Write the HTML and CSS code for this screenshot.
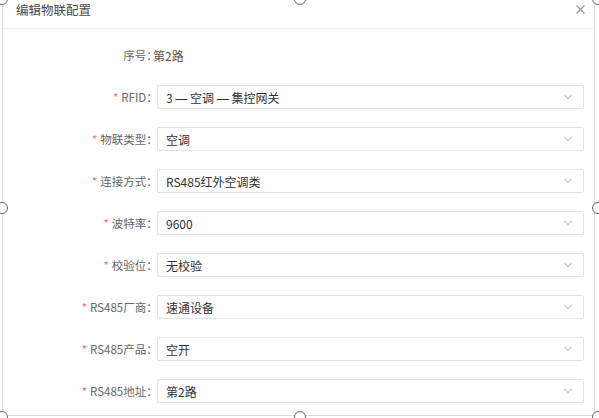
FILE: index.html
```html
<!DOCTYPE html>
<html lang="zh-CN">
<head>
    <meta charset="UTF-8">
    <title>编辑物联配置</title>
    <link rel="stylesheet" href="styles.css">
</head>
<body>
    <div class="stage">
        <div class="dialog">
            <div class="dialog-header">
                <span class="dialog-title">编辑物联配置</span>
                <button class="dialog-close" aria-label="关闭">
                    <svg width="9" height="9" viewBox="0 0 9 9">
                        <path d="M0.5 0.5 L8.5 8.5 M8.5 0.5 L0.5 8.5" stroke="#9a9a9a" stroke-width="1.1" fill="none"/>
                    </svg>
                </button>
            </div>

            <div class="form">
                <div class="form-row">
                    <label class="form-label">序号：</label>
                    <div class="form-text">第2路</div>
                </div>
                <div class="form-row">
                    <label class="form-label"><span class="req">*</span>RFID：</label>
                    <div class="select"><span>3 <span class="dash">—</span> 空调 <span class="dash">—</span> 集控网关</span><i class="arrow"></i></div>
                </div>
                <div class="form-row">
                    <label class="form-label"><span class="req">*</span>物联类型：</label>
                    <div class="select"><span>空调</span><i class="arrow"></i></div>
                </div>
                <div class="form-row">
                    <label class="form-label"><span class="req">*</span>连接方式：</label>
                    <div class="select"><span>RS485红外空调类</span><i class="arrow"></i></div>
                </div>
                <div class="form-row">
                    <label class="form-label"><span class="req">*</span>波特率：</label>
                    <div class="select"><span>9600</span><i class="arrow"></i></div>
                </div>
                <div class="form-row">
                    <label class="form-label"><span class="req">*</span>校验位：</label>
                    <div class="select"><span>无校验</span><i class="arrow"></i></div>
                </div>
                <div class="form-row">
                    <label class="form-label"><span class="req">*</span>RS485厂商：</label>
                    <div class="select"><span>速通设备</span><i class="arrow"></i></div>
                </div>
                <div class="form-row">
                    <label class="form-label"><span class="req">*</span>RS485产品：</label>
                    <div class="select"><span>空开</span><i class="arrow"></i></div>
                </div>
                <div class="form-row">
                    <label class="form-label"><span class="req">*</span>RS485地址：</label>
                    <div class="select"><span>第2路</span><i class="arrow"></i></div>
                </div>
            </div>
        </div>

        <!-- resize handles of the selected dialog -->
        <div class="selection">
            <span class="handle h-tl"></span>
            <span class="handle h-tm"></span>
            <span class="handle h-tr"></span>
            <span class="handle h-ml"></span>
            <span class="handle h-mr"></span>
            <span class="handle h-bl"></span>
            <span class="handle h-bm"></span>
            <span class="handle h-br"></span>
        </div>
    </div>
</body>
</html>
```

FILE: styles.css
```css
body {
    margin: 0;
    background: #fff;
    font-family: "Noto Sans CJK SC", "Noto Sans", sans-serif;
    font-size: 12px;
    overflow: hidden;
}

.stage {
    position: relative;
    width: 599px;
    height: 418px;
}

/* Dialog */
.dialog {
    margin-left: 2px;
    width: 593px;
    height: 416px;
    box-sizing: border-box;
    background: #fff;
    border: 1px solid #dcdcdc;
    border-top: none;
}
.dialog-header {
    height: 29px;
    box-sizing: border-box;
    padding: 1px 9px 0 13px;
    border-bottom: 1px solid #efefef;
    display: flex;
    justify-content: space-between;
    align-items: flex-start;
}
.dialog-title {
    font-size: 12.5px;
    line-height: 18px;
    color: #4a4a4a;
}
.dialog-close {
    background: none;
    border: none;
    padding: 0;
    margin-top: 4px;
    width: 9px;
    height: 9px;
    line-height: 0;
    cursor: pointer;
}

/* Form */
.form {
    padding: 14px 10px 0 0;
    display: flex;
    flex-direction: column;
    gap: 18px;
}
.form-row {
    display: grid;
    grid-template-columns: 148px 1fr;
    column-gap: 6px;
    height: 24px;
    align-items: center;
}
.form-label {
    text-align: right;
    font-size: 11.5px;
    color: #666;
    white-space: nowrap;
    margin-right: -1px;
    font-feature-settings: "halt";
}
.req {
    color: #f56c6c;
    margin-right: 3px;
}
.form-text {
    color: #555;
    margin-left: -4px;
}

.select {
    height: 24px;
    box-sizing: border-box;
    border: 1px solid #e2e2e2;
    border-radius: 2px;
    padding: 0 12px 0 8px;
    display: flex;
    align-items: center;
    justify-content: space-between;
    color: #333;
}
.dash {
    font-family: "Liberation Sans", sans-serif;
}
.arrow {
    width: 5px;
    height: 5px;
    border-right: 1px solid #c4c4c4;
    border-bottom: 1px solid #c4c4c4;
    transform: rotate(45deg);
    margin-top: -4px;
}

/* Selection handles */
.selection {
    position: absolute;
    left: 2px;
    top: -1px;
    width: 596px;
    height: 418px;
    pointer-events: none;
}
.handle {
    position: absolute;
    width: 10px;
    height: 10px;
    margin: -6px 0 0 -6px;
    border: 1px solid #666;
    border-radius: 50%;
    background: #fff;
}
.h-tl { left: 0; top: 0; }
.h-tm { left: 50%; top: 0; }
.h-tr { left: 100%; top: 0; }
.h-ml { left: 0; top: 50%; }
.h-mr { left: 100%; top: 50%; }
.h-bl { left: 0; top: 100%; }
.h-bm { left: 50%; top: 100%; }
.h-br { left: 100%; top: 100%; }
```
